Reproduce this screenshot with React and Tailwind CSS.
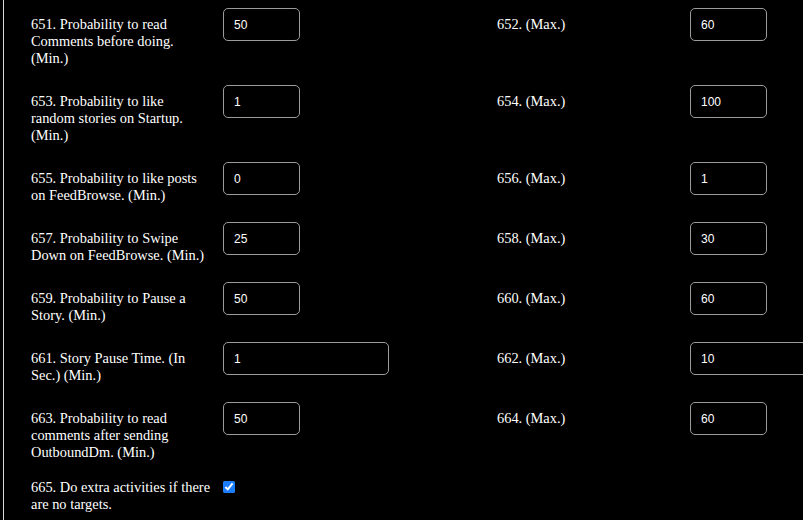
import React from 'react';

const rows = [
  { a: '651. Probability to read Comments before doing. (Min.)', av: '50', b: '652. (Max.)', bv: '60' },
  { a: '653. Probability to like random stories on Startup. (Min.)', av: '1', b: '654. (Max.)', bv: '100' },
  { a: '655. Probability to like posts on FeedBrowse. (Min.)', av: '0', b: '656. (Max.)', bv: '1' },
  { a: '657. Probability to Swipe Down on FeedBrowse. (Min.)', av: '25', b: '658. (Max.)', bv: '30' },
  { a: '659. Probability to Pause a Story. (Min.)', av: '50', b: '660. (Max.)', bv: '60' },
  { a: '661. Story Pause Time. (In Sec.) (Min.)', av: '1', b: '662. (Max.)', bv: '10', wide: true },
  { a: '663. Probability to read comments after sending OutboundDm. (Min.)', av: '50', b: '664. (Max.)', bv: '60' },
];

const Field = ({ value, wide }) => (
  <input
    type="text"
    defaultValue={value}
    className={
      'h-[33px] rounded-[5px] border border-[#9b9b9b] bg-black pl-[10px] text-[12px] text-white outline-none font-["Liberation_Sans",Arial,sans-serif] ' +
      (wide ? 'w-[166px]' : 'w-[77px]')
    }
  />
);

const App = () => {
  return (
    <div className="h-[520px] w-[803px] overflow-hidden bg-black pl-[3px] text-white font-['Liberation_Serif','Times_New_Roman',serif] text-[14.4px] leading-[17px]">
      <div className="h-[520px] border-l border-[#d8d8d8] pl-[27px] pt-[8px]">
        {rows.map((r) => (
          <div key={r.a} className="flex items-start pb-[18px]">
            <div className="w-[192px] shrink-0 pt-[8px] pr-[12px]">{r.a}</div>
            <div className="w-[274px] shrink-0">
              <Field value={r.av} wide={r.wide} />
            </div>
            <div className="w-[193px] shrink-0 pt-[8px]">{r.b}</div>
            <div className="shrink-0">
              <Field value={r.bv} wide={r.wide} />
            </div>
          </div>
        ))}
        <div className="flex items-start">
          <div className="w-[192px] shrink-0 pr-[12px]">
            665. Do extra activities if there are no targets.
          </div>
          <input type="checkbox" defaultChecked className="m-0 mt-[2px] h-[12px] w-[12px] accent-[#1a7cff]" />
        </div>
      </div>
    </div>
  );
};

export default App;
